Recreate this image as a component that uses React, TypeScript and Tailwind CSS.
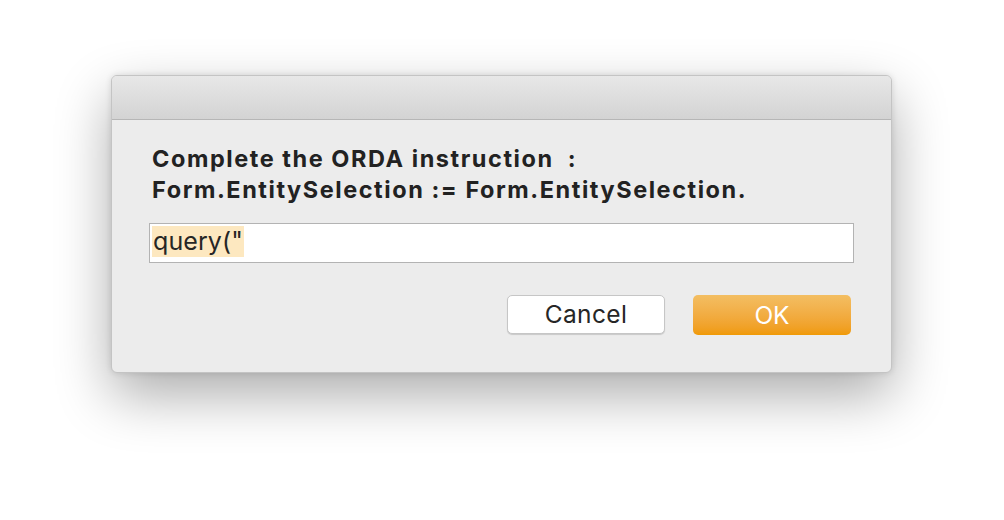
import React from "react";

export default function App() {
  return (
    <div
      className="w-[1004px] h-[520px] bg-white pt-[75px] pl-[111px]"
      style={{ fontFamily: "Inter, 'Noto Sans', sans-serif" }}
    >
      <div className="w-[781px] h-[298px] rounded-[6px] bg-[#ececec] border border-[#c4c4c4] shadow-[0_22px_55px_rgba(0,0,0,0.33),0_0_6px_rgba(0,0,0,0.12)] overflow-hidden flex flex-col">
        <div className="h-[44px] shrink-0 bg-gradient-to-b from-[#e8e8e8] to-[#d3d3d3] border-b border-[#b6b6b6]" />
        <div className="flex flex-col pl-[40px] pr-[37px] pt-[23px]">
          <div className="text-[23.5px] leading-[31px] font-bold text-[#222222] tracking-[1.55px]">
            <div>Complete the ORDA instruction&nbsp; :</div>
            <div>Form.EntitySelection := Form.EntitySelection.</div>
          </div>
          <div className="mt-[18px] ml-[-3px] h-[40px] bg-white border border-[#b3b3b3] flex items-start pt-[2px] pl-[2px]">
            <span className="bg-[#fde8c0] h-[31px] flex items-center px-[1px] text-[25px] text-[#262626] tracking-[0.1px]">
              query("
            </span>
          </div>
          <div className="flex justify-end gap-[28px] mt-[32px] pr-[3px]">
            <button className="w-[158px] h-[39px] rounded-[5px] bg-white border border-[#c6c6c6] shadow-[0_1px_1px_rgba(0,0,0,0.15)] text-[24.5px] text-[#262626] tracking-[0.4px] flex items-center justify-center pb-[1px]">
              Cancel
            </button>
            <button className="w-[158px] h-[40px] rounded-[5px] bg-gradient-to-b from-[#f3be62] to-[#f09a04] text-[24.5px] text-white flex items-center justify-center">
              OK
            </button>
          </div>
        </div>
      </div>
    </div>
  );
}
